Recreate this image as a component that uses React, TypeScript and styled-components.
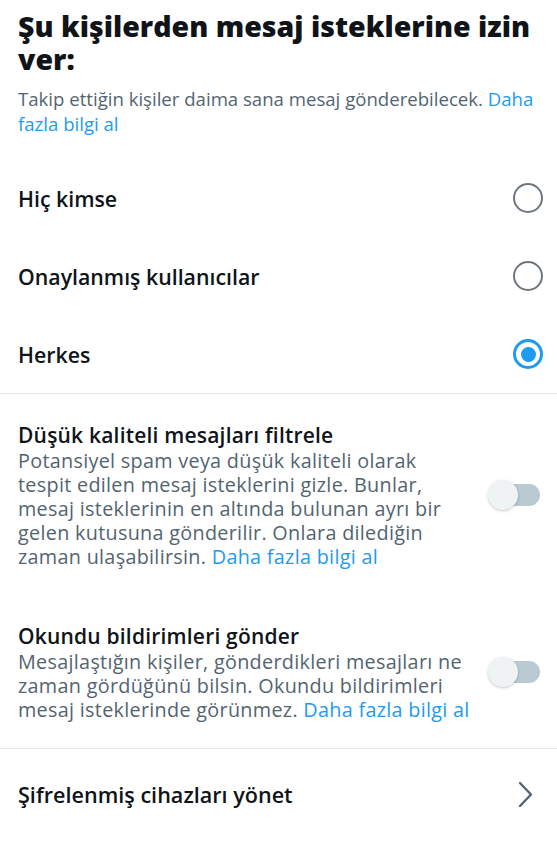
import styled, { createGlobalStyle } from 'styled-components';

const GlobalStyle = createGlobalStyle`
  body {
    margin: 0;
    background: #ffffff;
    font-family: 'Open Sans', 'Noto Sans', sans-serif;
    color: #0f1419;
  }
`;

const Page = styled.div`
  width: 557px;
  display: flex;
  flex-direction: column;
`;

const Header = styled.div`
  padding: 10px 14px 0 18px;
`;

const Title = styled.h1`
  margin: 0;
  font-size: 28.5px;
  line-height: 33px;
  font-weight: 800;
`;

const Subtitle = styled.p`
  margin: 10px 0 0;
  font-size: 18.6px;
  line-height: 25px;
  color: #536471;
`;

const Link = styled.span`
  color: #1d9bf0;
`;

const OptionList = styled.div`
  display: flex;
  flex-direction: column;
  margin-top: 23px;
`;

const OptionRow = styled.div`
  display: flex;
  align-items: center;
  justify-content: space-between;
  height: 78px;
  padding: 0 14px 0 18px;
  font-size: 21.3px;
  font-weight: 600;
`;

const Radio = styled.span<{ $checked?: boolean }>`
  box-sizing: border-box;
  width: 30px;
  height: 30px;
  border-radius: 50%;
  border: ${(p) => (p.$checked ? '3px solid #1d9bf0' : '2px solid #6e767d')};
  display: flex;
  align-items: center;
  justify-content: center;
  &::after {
    content: '';
    display: ${(p) => (p.$checked ? 'block' : 'none')};
    width: 15px;
    height: 15px;
    border-radius: 50%;
    background: #1d9bf0;
  }
`;

const Divider = styled.div`
  height: 1px;
  background: #e1e6e8;
`;

const Setting = styled.div<{ $top: number; $bottom: number }>`
  display: flex;
  align-items: center;
  gap: 18px;
  padding: ${(p) => `${p.$top}px 17px ${p.$bottom}px 18px`};
`;

const SettingText = styled.div`
  flex: 1;
`;

const SettingTitle = styled.div`
  font-size: 21px;
  line-height: 28px;
  letter-spacing: 0.2px;
  font-weight: 600;
`;

const SettingDesc = styled.div`
  font-size: 19.8px;
  line-height: 24px;
  letter-spacing: 0.3px;
  color: #536471;
`;

const Toggle = styled.span`
  position: relative;
  width: 52px;
  height: 30px;
  flex-shrink: 0;
  &::after {
    content: '';
    position: absolute;
    left: 10px;
    right: 0;
    top: 4px;
    height: 22px;
    border-radius: 11px;
    background: #b9cad3;
  }
  &::before {
    content: '';
    position: absolute;
    left: 0;
    top: 0;
    width: 30px;
    height: 30px;
    border-radius: 50%;
    background: #eff3f4;
    box-shadow: 0 1px 3px rgba(0, 0, 0, 0.22);
    z-index: 1;
  }
`;

const NavRow = styled.div`
  display: flex;
  align-items: center;
  justify-content: space-between;
  height: 90px;
  padding: 0 24px 0 18px;
  font-size: 21.6px;
  font-weight: 600;
`;

function Chevron() {
  return (
    <svg width="15" height="27" viewBox="0 0 15 27" fill="none">
      <path d="M2 2 L13 13.5 L2 25" stroke="#536471" strokeWidth="2.4" strokeLinecap="round" strokeLinejoin="round" />
    </svg>
  );
}

const options = [
  { label: 'Hiç kimse', checked: false },
  { label: 'Onaylanmış kullanıcılar', checked: false },
  { label: 'Herkes', checked: true },
];

export default function App() {
  return (
    <Page>
      <GlobalStyle />
      <Header>
        <Title>Şu kişilerden mesaj isteklerine izin ver:</Title>
        <Subtitle>
          Takip ettiğin kişiler daima sana mesaj gönderebilecek. <Link>Daha fazla bilgi al</Link>
        </Subtitle>
      </Header>
      <OptionList>
        {options.map((o) => (
          <OptionRow key={o.label}>
            {o.label}
            <Radio $checked={o.checked} />
          </OptionRow>
        ))}
      </OptionList>
      <Divider />
      <Setting $top={27} $bottom={0}>
        <SettingText>
          <SettingTitle>Düşük kaliteli mesajları filtrele</SettingTitle>
          <SettingDesc>
            Potansiyel spam veya düşük kaliteli olarak tespit edilen mesaj isteklerini gizle. Bunlar, mesaj
            isteklerinin en altında bulunan ayrı bir gelen kutusuna gönderilir. Onlara dilediğin zaman
            ulaşabilirsin. <Link>Daha fazla bilgi al</Link>
          </SettingDesc>
        </SettingText>
        <Toggle />
      </Setting>
      <Setting $top={53} $bottom={26}>
        <SettingText>
          <SettingTitle>Okundu bildirimleri gönder</SettingTitle>
          <SettingDesc>
            Mesajlaştığın kişiler, gönderdikleri mesajları ne zaman gördüğünü bilsin. Okundu bildirimleri
            mesaj isteklerinde görünmez. <Link>Daha fazla bilgi al</Link>
          </SettingDesc>
        </SettingText>
        <Toggle />
      </Setting>
      <Divider />
      <NavRow>
        Şifrelenmiş cihazları yönet
        <Chevron />
      </NavRow>
    </Page>
  );
}
